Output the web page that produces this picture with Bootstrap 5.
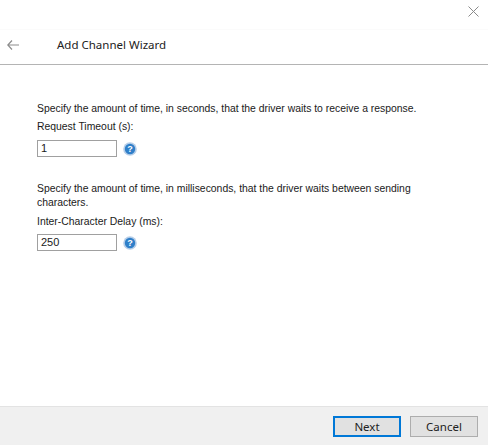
<!DOCTYPE html>
<html lang="en">
<head>
    <meta charset="UTF-8">
    <title>Add Channel Wizard</title>
    <link href="https://cdn.jsdelivr.net/npm/bootstrap@5.3.2/dist/css/bootstrap.min.css" rel="stylesheet">
    <style>
        html, body { height: 445px; overflow: hidden; }
        body { background: #fff; font-family: "Liberation Sans", Arial, sans-serif; font-size: 10.4px; color: #1a1a1a; }
        .wizard { height: 445px; }
        .close-row { height: 29px; padding-top: 6px; padding-right: 9px; }
        .title-row { height: 36px; border-top: 1px solid #fbfbfb; border-bottom: 1px solid #b4b4b4; padding-left: 7px; padding-bottom: 5px; }
        .back-arrow { width: 12px; height: 10px; }
        .wizard-title { margin-left: 38px; font-family: "Noto Sans", sans-serif; font-size: 11.5px; color: #222; }
        .form-area { padding: 37px 0 0 37px; }
        .form-group-block { margin-bottom: 25px; width: 400px; }
        .form-text-line { line-height: 14px; margin: 0 0 4px; white-space: nowrap; }
        .second-block .form-text-line { margin-bottom: 5px; }
        .field-row { gap: 6px; margin-top: 6px; }
        .second-block .field-row { margin-top: 3px; }
        .field-box { width: 80px; height: 17px; border: 1px solid #a0a0a0; background: #fff; padding: 0 3px; line-height: 15px; font-size: 11px; }
        .footer-bar { height: 39px; background: #f0f0f0; border-top: 1px solid #e3e3e3; padding-right: 10px; padding-bottom: 8px; gap: 9px; }
        .wiz-btn { width: 68px; height: 21px; padding: 0; background: #e1e1e1; border: 1px solid #adadad; border-radius: 0; font-family: "Noto Sans", sans-serif; font-size: 11.5px; line-height: 17px; color: #222; }
        .wiz-btn-default { border: 2px solid #0078d7; }
    </style>
</head>
<body>
<div class="wizard d-flex flex-column">
    <div class="close-row d-flex justify-content-end">
        <svg width="11" height="11" viewBox="0 0 11 11"><path d="M.5.5l10 10M10.5.5l-10 10" stroke="#8a8a8a" fill="none"/></svg>
    </div>
    <div class="title-row d-flex align-items-center">
        <svg class="back-arrow" viewBox="0 0 12 10"><path d="M5 .5L.8 5 5 9.5M.8 5H12" stroke="#8c8c8c" stroke-width="1.2" fill="none"/></svg>
        <span class="wizard-title">Add Channel Wizard</span>
    </div>
    <div class="form-area flex-grow-1">
        <div class="form-group-block">
            <p class="form-text-line">Specify the amount of time, in seconds, that the driver waits to receive a response.</p>
            <div class="form-text-line">Request Timeout (s):</div>
            <div class="field-row d-flex align-items-center">
                <div class="field-box">1</div>
                <svg width="14" height="14" viewBox="0 0 14 14">
                    <circle cx="7" cy="7" r="6.8" fill="#b5cde8"/>
                    <circle cx="7" cy="7" r="5.2" fill="#2f7fc9"/>
                    <text x="7" y="10" text-anchor="middle" font-family="Liberation Sans" font-size="9" font-weight="700" fill="#fff">?</text>
                </svg>
            </div>
        </div>
        <div class="form-group-block second-block">
            <p class="form-text-line mb-0">Specify the amount of time, in milliseconds, that the driver waits between sending</p>
            <p class="form-text-line">characters.</p>
            <div class="form-text-line">Inter-Character Delay (ms):</div>
            <div class="field-row d-flex align-items-center">
                <div class="field-box">250</div>
                <svg width="14" height="14" viewBox="0 0 14 14">
                    <circle cx="7" cy="7" r="6.8" fill="#b5cde8"/>
                    <circle cx="7" cy="7" r="5.2" fill="#2f7fc9"/>
                    <text x="7" y="10" text-anchor="middle" font-family="Liberation Sans" font-size="9" font-weight="700" fill="#fff">?</text>
                </svg>
            </div>
        </div>
    </div>
    <div class="footer-bar d-flex justify-content-end align-items-end">
        <button type="button" class="btn wiz-btn wiz-btn-default">Next</button>
        <button type="button" class="btn wiz-btn">Cancel</button>
    </div>
</div>
<script src="https://cdn.jsdelivr.net/npm/bootstrap@5.3.2/dist/js/bootstrap.bundle.min.js"></script>
</body>
</html>
